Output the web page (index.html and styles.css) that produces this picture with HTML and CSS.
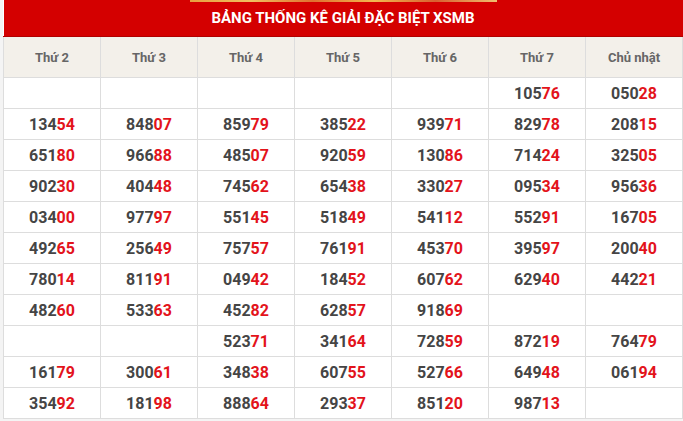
FILE: index.html
```html
<!DOCTYPE html>
<html>
<head>
<meta charset="utf-8">
<link rel="stylesheet" href="styles.css">
</head>
<body>
<div class="wrap">
  <div class="banner-strip"></div>
  <table class="stats">
    <thead>
      <tr><th colspan="7" class="title">BẢNG THỐNG KÊ GIẢI ĐẶC BIỆT XSMB</th></tr>
      <tr class="days">
        <th>Thứ 2</th><th>Thứ 3</th><th>Thứ 4</th><th>Thứ 5</th><th>Thứ 6</th><th>Thứ 7</th><th>Chủ nhật</th>
      </tr>
    </thead>
    <tbody id="body">
      <tr><td></td><td></td><td></td><td></td><td></td><td>105<b>76</b></td><td>050<b>28</b></td></tr>
      <tr><td>134<b>54</b></td><td>848<b>07</b></td><td>859<b>79</b></td><td>385<b>22</b></td><td>939<b>71</b></td><td>829<b>78</b></td><td>208<b>15</b></td></tr>
      <tr><td>651<b>80</b></td><td>966<b>88</b></td><td>485<b>07</b></td><td>920<b>59</b></td><td>130<b>86</b></td><td>714<b>24</b></td><td>325<b>05</b></td></tr>
      <tr><td>902<b>30</b></td><td>404<b>48</b></td><td>745<b>62</b></td><td>654<b>38</b></td><td>330<b>27</b></td><td>095<b>34</b></td><td>956<b>36</b></td></tr>
      <tr><td>034<b>00</b></td><td>977<b>97</b></td><td>551<b>45</b></td><td>518<b>49</b></td><td>541<b>12</b></td><td>552<b>91</b></td><td>167<b>05</b></td></tr>
      <tr><td>492<b>65</b></td><td>256<b>49</b></td><td>757<b>57</b></td><td>761<b>91</b></td><td>453<b>70</b></td><td>395<b>97</b></td><td>200<b>40</b></td></tr>
      <tr><td>780<b>14</b></td><td>811<b>91</b></td><td>049<b>42</b></td><td>184<b>52</b></td><td>607<b>62</b></td><td>629<b>40</b></td><td>442<b>21</b></td></tr>
      <tr><td>482<b>60</b></td><td>533<b>63</b></td><td>452<b>82</b></td><td>628<b>57</b></td><td>918<b>69</b></td><td></td><td></td></tr>
      <tr><td></td><td></td><td>523<b>71</b></td><td>341<b>64</b></td><td>728<b>59</b></td><td>872<b>19</b></td><td>764<b>79</b></td></tr>
      <tr><td>161<b>79</b></td><td>300<b>61</b></td><td>348<b>38</b></td><td>607<b>55</b></td><td>527<b>66</b></td><td>649<b>48</b></td><td>061<b>94</b></td></tr>
      <tr><td>354<b>92</b></td><td>181<b>98</b></td><td>888<b>64</b></td><td>293<b>37</b></td><td>851<b>20</b></td><td>987<b>13</b></td><td></td></tr>
    </tbody>
  </table>
</div>
</body>
</html>
```
FILE: styles.css
```css
html, body {
  margin: 0;
  padding: 0;
  background: #ffffff;
}
body {
  width: 683px;
  height: 421px;
  overflow: hidden;
  font-family: Roboto, "Liberation Sans", Arial, sans-serif;
  background: #f4f4f4;
}
.wrap {
  position: relative;
  padding-left: 3px;
  width: 680px;
}
.banner-strip {
  position: absolute;
  left: 190px;
  top: 0;
  width: 307px;
  height: 2px;
  background: linear-gradient(90deg, #e8a040, #f0c060 20%, #e07030 40%, #f2b850 60%, #d86030 80%, #f0c070);
  z-index: 2;
}
.stats {
  border-collapse: collapse;
  width: 680px;
  table-layout: fixed;
  background: #ffffff;
}
.stats th.title {
  background: #d40000;
  color: #ffffff;
  height: 36px;
  padding: 0;
  font-size: 15px;
  font-weight: 700;
  text-align: center;
  border: 0;
  border-bottom: 1px solid #b00000;
}
.days th {
  background: #f3f0ea;
  color: #666666;
  font-size: 13px;
  font-weight: 700;
  height: 40px;
  padding: 0;
  border: 1px solid #dddddd;
  border-top: 0;
}
.stats td {
  height: 30px;
  padding: 0;
  text-align: center;
  border: 1px solid #dddddd;
  font-size: 16px;
  font-weight: 700;
  color: #454545;
}
.stats td b {
  color: #e3131b;
  font-weight: 700;
}
```
